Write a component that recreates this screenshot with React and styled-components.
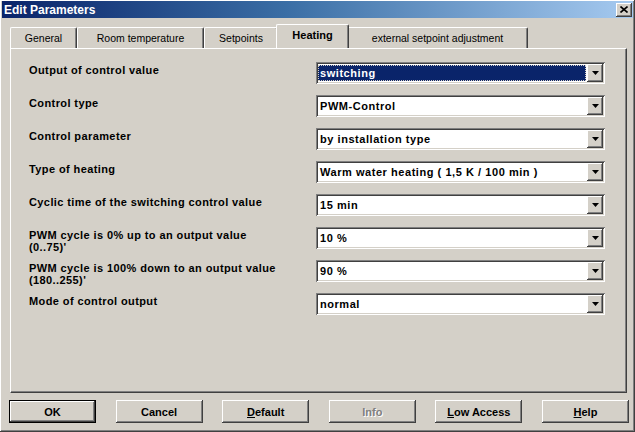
import React from "react";
import styled, { createGlobalStyle, css } from "styled-components";

const GlobalStyle = createGlobalStyle`
  html, body {
    margin: 0;
    padding: 0;
    background: #d4d0c8;
  }
  * {
    box-sizing: border-box;
  }
`;

const raised = css`
  box-shadow: inset -1px -1px #404040, inset 1px 1px #ffffff,
    inset -2px -2px #808080, inset 2px 2px #d4d0c8;
`;

const Window = styled.div`
  width: 635px;
  height: 432px;
  padding: 1px 2px 3px 2px;
  background: #d4d0c8;
  font-family: "Liberation Sans", Arial, sans-serif;
  color: #000;
  ${raised};
  display: flex;
  flex-direction: column;
`;

const TitleBar = styled.div`
  height: 17px;
  display: flex;
  align-items: center;
  justify-content: space-between;
  padding: 0 1px 0 2px;
  background: linear-gradient(to right, #0a246a 0%, #3a6ea5 45%, #a6caf0 100%);
`;

const Title = styled.span`
  color: #fff;
  font-weight: bold;
  font-size: 12px;
`;

const CloseButton = styled.div`
  width: 16px;
  height: 14px;
  background: #d4d0c8;
  ${raised};
  display: flex;
  align-items: center;
  justify-content: center;
`;

const TabStrip = styled.div`
  display: flex;
  align-items: flex-end;
  height: 24px;
  margin-top: 6px;
  padding-left: 8px;
`;

const Tab = styled.div`
  position: relative;
  width: ${(p) => p.$w}px;
  height: 21px;
  display: flex;
  align-items: center;
  justify-content: center;
  font-size: 10.5px;
  background: #d4d0c8;
  border-top: 1px solid #fff;
  border-left: 1px solid #fff;
  border-right: 1px solid #404040;
  box-shadow: inset -1px 0 #808080;
  border-radius: 2px 2px 0 0;
  ${(p) =>
    p.$active &&
    css`
      height: 24px;
      margin: 0 -2px;
      width: ${p.$w + 4}px;
      font-weight: bold;
      font-size: 11px;
      z-index: 1;
      padding-bottom: 3px;
    `}
`;

const Panel = styled.div`
  margin-left: 8px;
  width: 617px;
  height: 345px;
  border-top: 1px solid #fff;
  border-left: 1px solid #fff;
  border-right: 1px solid #404040;
  border-bottom: 1px solid #404040;
  box-shadow: inset -1px -1px #808080;
  padding: 13px 0 0 18px;
`;

const Row = styled.div`
  display: flex;
  align-items: flex-start;
  height: 22px;
  margin-bottom: 11px;
`;

const Label = styled.div`
  width: 287px;
  padding-top: 2px;
  font-size: 11px;
  font-weight: bold;
  letter-spacing: 0.4px;
  line-height: 12px;
  white-space: nowrap;
`;

const Combo = styled.div`
  width: 289px;
  height: 22px;
  display: flex;
  align-items: stretch;
  padding: 2px;
  background: #fff;
  box-shadow: inset 1px 1px #808080, inset -1px -1px #ffffff,
    inset 2px 2px #404040, inset -2px -2px #d4d0c8;
`;

const Value = styled.div`
  flex: 1;
  display: flex;
  align-items: center;
  padding-left: 2px;
  margin: 1px 1px 1px 0;
  font-size: 11px;
  font-weight: bold;
  letter-spacing: 0.55px;
  white-space: nowrap;
  ${(p) =>
    p.$focused &&
    css`
      background: #0a246a;
      color: #fff;
      outline: 1px dotted #d4d0c8;
      outline-offset: -1px;
    `}
`;

const ArrowButton = styled.div`
  width: 16px;
  background: #d4d0c8;
  ${raised};
  display: flex;
  align-items: center;
  justify-content: center;
`;

const ButtonBar = styled.div`
  display: flex;
  justify-content: space-between;
  margin-top: 7px;
  padding: 0 0 0 7px;
  width: 627px;
`;

const Button = styled.div`
  width: 87px;
  height: 23px;
  display: flex;
  align-items: center;
  justify-content: center;
  font-size: 11px;
  font-weight: bold;
  background: #d4d0c8;
  ${raised};
  ${(p) =>
    p.$default &&
    css`
      border: 1px solid #000;
      box-shadow: inset -1px -1px #404040, inset 1px 1px #ffffff,
        inset -2px -2px #808080;
    `}
  ${(p) =>
    p.$disabled &&
    css`
      color: #808080;
      text-shadow: 1px 1px #fff;
    `}
  u {
    text-decoration: underline;
  }
`;

const Arrow = () => (
  <svg width="7" height="4" viewBox="0 0 7 4">
    <path d="M0 0h7L3.5 4z" fill="#000" />
  </svg>
);

const CloseIcon = () => (
  <svg width="8" height="7" viewBox="0 0 8 7">
    <path d="M0.5 0.5L7.5 6.5M7.5 0.5L0.5 6.5" stroke="#000" strokeWidth="1.6" />
  </svg>
);

const tabs = [
  { name: "General", w: 67 },
  { name: "Room temperature", w: 127 },
  { name: "Setpoints", w: 74 },
  { name: "Heating", w: 69, active: true },
  { name: "external setpoint adjustment", w: 181 },
];

const params = [
  { label: "Output of control value", value: "switching", focused: true },
  { label: "Control type", value: "PWM-Control" },
  { label: "Control parameter", value: "by installation type" },
  { label: "Type of heating", value: "Warm water heating ( 1,5 K / 100 min )" },
  { label: "Cyclic time of the switching control value", value: "15 min" },
  { label: ["PWM cycle is 0% up to an output value", "(0..75)'"], value: "10 %" },
  { label: ["PWM cycle is 100% down to an output value", "(180..255)'"], value: "90 %" },
  { label: "Mode of control output", value: "normal" },
];

const App = () => {
  return (
    <>
      <GlobalStyle />
      <Window>
        <TitleBar>
          <Title>Edit Parameters</Title>
          <CloseButton>
            <CloseIcon />
          </CloseButton>
        </TitleBar>

        <TabStrip>
          {tabs.map((t) => (
            <Tab key={t.name} $w={t.w} $active={t.active}>
              {t.name}
            </Tab>
          ))}
        </TabStrip>

        <Panel>
          {params.map((p, i) => (
            <Row key={i}>
              <Label>
                {Array.isArray(p.label) ? (
                  <>
                    {p.label[0]}
                    <br />
                    {p.label[1]}
                  </>
                ) : (
                  p.label
                )}
              </Label>
              <Combo>
                <Value $focused={p.focused}>{p.value}</Value>
                <ArrowButton>
                  <Arrow />
                </ArrowButton>
              </Combo>
            </Row>
          ))}
        </Panel>

        <ButtonBar>
          <Button $default>OK</Button>
          <Button>Cancel</Button>
          <Button>
            <span>
              <u>D</u>efault
            </span>
          </Button>
          <Button $disabled>Info</Button>
          <Button>
            <span>
              <u>L</u>ow Access
            </span>
          </Button>
          <Button>
            <span>
              <u>H</u>elp
            </span>
          </Button>
        </ButtonBar>
      </Window>
    </>
  );
};

export default App;
